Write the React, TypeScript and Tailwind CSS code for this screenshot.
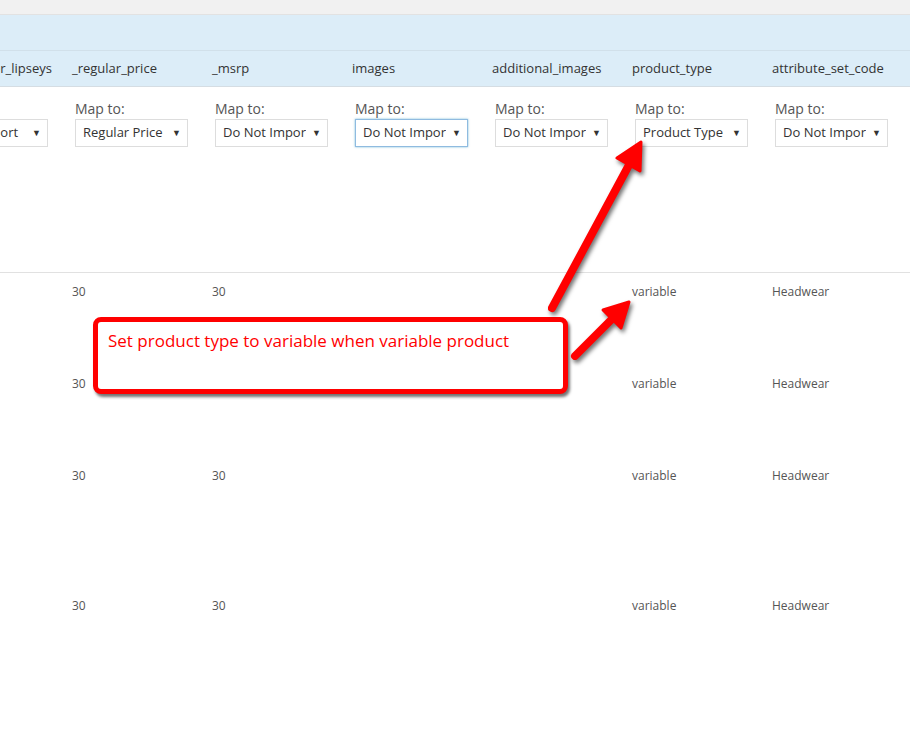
import React from "react";

type Col = { key: string; label: string; value: string; focused?: boolean };

const cols: Col[] = [
  { key: "regular", label: "_regular_price", value: "Regular Price" },
  { key: "msrp", label: "_msrp", value: "Do Not Impor" },
  { key: "images", label: "images", value: "Do Not Impor", focused: true },
  { key: "additional", label: "additional_images", value: "Do Not Impor" },
  { key: "type", label: "product_type", value: "Product Type" },
  { key: "attr", label: "attribute_set_code", value: "Do Not Impor" },
];

const rows = [
  { h: "h-[92px]", cells: ["30", "30", "", "", "variable", "Headwear"] },
  { h: "h-[92px]", cells: ["30", "30", "", "", "variable", "Headwear"] },
  { h: "h-[130px]", cells: ["30", "30", "", "", "variable", "Headwear"] },
  { h: "h-[130px]", cells: ["30", "30", "", "", "variable", "Headwear"] },
];

const Select: React.FC<{ value: string; focused?: boolean }> = ({ value, focused }) => (
  <div
    className={
      "flex items-center justify-between w-[113px] h-[28px] pl-[7px] pr-[6px] bg-white border text-[13px] text-[#333] " +
      (focused ? "border-[#8fbbe0] shadow-[0_0_2px_rgba(30,140,190,0.6)]" : "border-[#dddddd]")
    }
  >
    <span className="whitespace-nowrap overflow-hidden">{value}</span>
    <span className="text-[9px] text-[#333] ml-1">▼</span>
  </div>
);

const Arrows: React.FC = () => (
  <svg
    className="absolute left-0 top-0 pointer-events-none drop-shadow-[2px_3px_2px_rgba(0,0,0,0.55)]"
    width="910"
    height="729"
  >
    <line x1="552" y1="308" x2="629" y2="165" stroke="#ff0000" strokeWidth="8" strokeLinecap="round" />
    <polygon points="641,142 640,171 617,158" fill="#ff0000" stroke="#ff0000" strokeWidth="3" strokeLinejoin="round" />
    <line x1="575" y1="356" x2="613" y2="318" stroke="#ff0000" strokeWidth="8" strokeLinecap="round" />
    <polygon points="629,302 621,328 603,310" fill="#ff0000" stroke="#ff0000" strokeWidth="3" strokeLinejoin="round" />
  </svg>
);

export default function App() {
  return (
    <div className="relative w-[910px] h-[729px] overflow-hidden bg-white font-['Open_Sans',sans-serif]">
      <div className="h-[15px] bg-[#f1f1f1] border-b border-[#e2e2e2]" />
      <div className="h-[36px] bg-[#dcedf8] border-b border-[#d1e0ea]" />

      {/* header */}
      <div className="flex h-[36px] bg-[#dcedf8] border-b border-[#d5dde3] text-[13px] text-[#333]">
        <div className="w-[62px] flex justify-end items-center overflow-hidden pr-[10px]">
          <span className="whitespace-nowrap">_dealer_lipseys</span>
        </div>
        {cols.map((c) => (
          <div key={c.key} className="w-[140px] flex items-center pl-[10px] whitespace-nowrap">
            {c.label}
          </div>
        ))}
      </div>

      {/* map row */}
      <div className="flex h-[186px] border-b border-[#e1e1e1] text-[14px] text-[#444]">
        <div className="w-[62px] flex justify-end overflow-hidden pt-[32px] pr-[14px]">
          <div className="shrink-0 flex items-center justify-end w-[113px] h-[28px] pr-[6px] border border-[#dddddd] text-[13px] text-[#333]">
            <span className="whitespace-nowrap mr-[14px]">Do Not Import</span>
            <span className="text-[9px]">▼</span>
          </div>
        </div>
        {cols.map((c) => (
          <div key={c.key} className="w-[140px] pl-[13px] pt-[12px]">
            <div className="leading-[20px] text-[#555]">Map to:</div>
            <Select value={c.value} focused={c.focused} />
          </div>
        ))}
      </div>

      {/* data rows */}
      {rows.map((r, i) => (
        <div key={i} className={"flex text-[12px] text-[#555] " + r.h}>
          <div className="w-[62px]" />
          {r.cells.map((v, j) => (
            <div key={j} className="w-[140px] pl-[10px] pt-[10px] leading-[18px]">
              {v}
            </div>
          ))}
        </div>
      ))}

      {/* annotation callout */}
      <div className="absolute left-[93px] top-[317px] w-[475px] h-[77px] border-[5px] border-[#ff0000] rounded-[8px] bg-white shadow-[2px_3px_3px_rgba(0,0,0,0.55)] pl-[10px] pt-[6px]">
        <span className="text-[17px] text-[#ff0000] whitespace-nowrap">
          Set product type to variable when variable product
        </span>
      </div>

      <Arrows />
    </div>
  );
}
